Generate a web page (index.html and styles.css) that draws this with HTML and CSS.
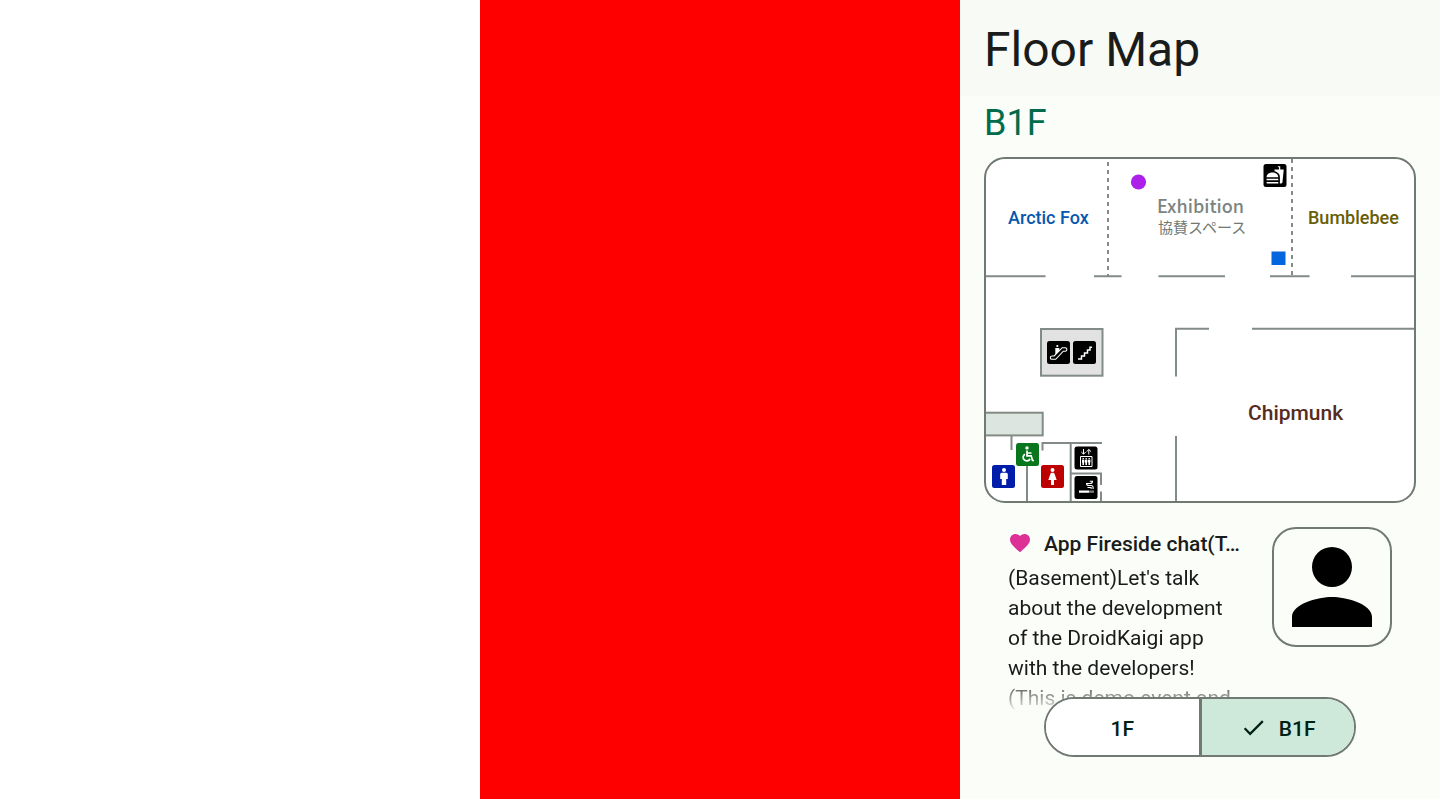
FILE: index.html
```html
<!DOCTYPE html>
<html lang="en">
<head>
<meta charset="utf-8">
<meta name="viewport" content="width=device-width, initial-scale=1">
<title>Floor Map</title>
<link rel="stylesheet" href="styles.css">
</head>
<body>
<div class="panes">
  <div class="pane pane-blank"></div>
  <div class="pane pane-red"></div>
  <main class="pane app">
    <header class="app-bar"><h1 class="app-title">Floor Map</h1></header>
    <section class="content">
      <h2 class="floor-name">B1F</h2>
      <svg class="map" viewBox="984 157 432 346" role="img" aria-label="B1F floor map">
        <defs><clipPath id="outline"><rect x="985" y="158" width="430" height="344" rx="20"/></clipPath></defs>
        <rect x="985" y="158" width="430" height="344" rx="20" fill="#fff"/>
        <g clip-path="url(#outline)">
          <path class="wall" d="M985 276.300H1045.500M1094 276.300H1121.500M1158.500 276.300H1225M1270 276.300H1309.500M1351 276.300H1415M1176 376.500V328.700H1209M1252 328.700H1415M1176 436V502"/>
          <path class="wall dashed" d="M1108 162V276M1292 159V276"/>
          <rect class="wall stairs" x="1041" y="329" width="61.500" height="46.700"/>
          <rect class="wall room" x="980" y="412.700" width="62.700" height="22.700"/>
          <path class="wall" d="M1011.500 436V450M1042.500 450.500V443H1102M1027 465V502M1070.700 443V502M1071 473.500H1101V485M1101 491.500V502"/>
        </g>
        <rect class="frame" x="985" y="158" width="430" height="344" rx="20"/>
        <circle cx="1138.500" cy="182" r="7.600" fill="#ad20ea"/>
        <rect x="1271.500" y="251.500" width="14" height="13.500" fill="#0466df"/>
        <text class="label" x="1008" y="224" fill="#0757ae">Arctic Fox</text>
        <text class="label" x="1308" y="224" fill="#685e08">Bumblebee</text>
        <text class="label label-large" x="1248" y="420" fill="#582b1f">Chipmunk</text>
        <text class="label-hall" x="1157" y="213">Exhibition</text>
        <text class="label-jp" x="1158" y="233">協賛スペース</text>

        <g transform="translate(1263.500 164)">
          <rect width="23" height="23" rx="2.500"/>
          <path transform="translate(2.300 1.500) scale(.78)" fill="#fff" d="M18.060 22.990h1.660c.84 0 1.530-.64 1.630-1.460L23 5.050h-4.500V1h-3v1.300h1.500v2.750h-5.940l.3 2.340c1.710.47 3.310 1.320 4.270 2.260 1.440 1.420 2.430 2.890 2.430 5.290zM1 21.990V21h15.030v1.990H2c-.56 0-1-.45-1-1zm15.030-7c0-8-15.030-8-15.030 0zM1 17h15v2H1z"/>
        </g>
        <g transform="translate(1047 341)">
          <rect width="23" height="23" rx="2.500"/>
          <path d="M5 18.300H8.700L16.300 10.200H18.500A1.800 1.800 0 0 0 18.500 6.700H15.200L7.200 15H5A1.650 1.650 0 0 0 5 18.300Z" fill="none" stroke="#fff" stroke-width="1.100"/>
          <circle cx="10.300" cy="5" r="1.100" fill="#fff"/><path d="M8.300 7H12.300V10L9.300 13H8.300Z" fill="#fff"/>
        </g>
        <g transform="translate(1073 341)">
          <rect width="23" height="23" rx="2.500"/>
          <path d="M5 18H8.500V15H11.500V12H14.500V9H17V6.300H19" fill="none" stroke="#fff" stroke-width="1.500"/>
        </g>
        <g transform="translate(1016 443)">
          <rect width="23" height="23" rx="2.500" fill="#07761d"/>
          <circle cx="11" cy="4.900" r="1.700" fill="#fff"/>
          <path d="M11 7.500V12.800H15.200L16.500 17.500H18M11.500 10H15.500M8.900 11.200A3.600 3.600 0 1 0 14 15.800" fill="none" stroke="#fff" stroke-width="1.700"/>
        </g>
        <g transform="translate(992 465)">
          <rect width="23" height="23" rx="2.500" fill="#001da9"/>
          <circle cx="12" cy="4.900" r="2" fill="#fff"/>
          <path d="M9.700 7.700H14.300Q15.800 7.700 15.800 9.200V14H14.200V20H9.800V14H8.200V9.200Q8.200 7.700 9.700 7.700Z" fill="#fff"/>
        </g>
        <g transform="translate(1041 465)">
          <rect width="23" height="23" rx="2.500" fill="#bd0000"/>
          <circle cx="11.500" cy="4.900" r="2" fill="#fff"/>
          <path d="M10.700 7.700H12.300Q13.200 7.700 13.500 8.700L15.700 15H13V20H10V15H7.300L9.500 8.700Q9.800 7.700 10.700 7.700Z" fill="#fff"/>
        </g>
        <g transform="translate(1074.500 446.500)">
          <rect width="23" height="23" rx="2.500"/>
          <path d="M6 10H17.500V20H6ZM9 2.500V7.500M6.800 5.500L9 7.700L11.200 5.500M14.300 8V3M12 5.200L14.300 3L16.600 5.200" fill="none" stroke="#fff"/>
          <path d="M7.500 13.200H9.900V16H9.500V18.500H7.900V16H7.500ZM10.500 13.200H12.900V16H12.500V18.500H10.900V16H10.500ZM13.500 13.200H15.900V16H15.500V18.500H13.900V16H13.500ZM8 11.500H9.400V12.700H8ZM11 11.500H12.400V12.700H11ZM14 11.500H15.400V12.700H14Z" fill="#fff"/>
        </g>
        <g transform="translate(1074.500 476)">
          <rect width="23" height="23" rx="2.500"/>
          <path d="M4.500 14.500H15V16.800H4.500ZM16 14.500H17V16.800H16ZM18 14.500H19V16.800H18Z" fill="#fff"/>
          <path d="M18.600 13V11.500Q18.600 9.500 16.500 9.500H14.500Q12 9.500 12 7.500H15.500Q18 7.500 18 5.200H15.300M16.600 13V11.500H13" fill="none" stroke="#fff" stroke-width="1.100"/>
        </g>
      </svg>

      <article class="event">
        <div class="event-text">
          <div class="event-head">
            <svg class="heart" viewBox="0 0 24 24" aria-hidden="true"><path d="M12 21.350l-1.450-1.320C5.400 15.360 2 12.280 2 8.500 2 5.420 4.420 3 7.500 3c1.740 0 3.410.81 4.500 2.090C13.090 3.810 14.760 3 16.500 3 19.580 3 22 5.420 22 8.500c0 3.780-3.400 6.860-8.550 11.540z"/></svg>
            <h3 class="event-title">App Fireside chat(T…</h3>
          </div>
          <p class="event-body">(Basement)Let's talk about the development of the DroidKaigi app with the developers!<br>(This is demo event and</p>
        </div>
        <svg class="avatar" viewBox="0 0 120 120" role="img" aria-label="Speaker">
          <rect class="frame" x="1" y="1" width="118" height="118" rx="23"/>
          <path d="M60 60a20 20 0 1 0 0-40 20 20 0 0 0 0 40zM60 70c-13.350 0-40 6.700-40 20v10h80V90c0-13.300-26.650-20-40-20z"/>
        </svg>
      </article>
    </section>
    <div class="switcher" role="group" aria-label="Floor">
      <button class="segment" type="button" aria-pressed="false">1F</button>
      <button class="segment selected" type="button" aria-pressed="true">
        <svg class="check" viewBox="0 0 24 24" aria-hidden="true"><path d="M9 16.170L4.830 12l-1.420 1.410L9 19 21 7l-1.410-1.410z"/></svg>B1F
      </button>
    </div>
  </main>
</div>
</body>
</html>
```
FILE: styles.css
```css
* { box-sizing: border-box; }
body { margin: 0; font-family: Roboto, "Noto Sans CJK JP", sans-serif; color: #191c1b; }
h1, h2, h3, p { margin: 0; font-weight: 400; }
.panes { display: grid; grid-template-columns: repeat(3, minmax(0, 1fr)); min-height: 100vh; }
.pane-blank { background: #fff; }
.pane-red { background: #f00; }
.app { position: relative; background: #fbfdf8; }
.app-bar { padding: 20px 24px 16px; background: #f8faf5; }
.app-title { font-size: 48px; line-height: 60px; }
.content { padding: 0 24px; }
.floor-name { margin-bottom: 7px; font-size: 36px; line-height: 54px; color: #006c4c; }
.map { display: block; width: 100%; }
.frame { fill: none; stroke: #707974; stroke-width: 2px; }
.wall { fill: none; stroke: #828b86; stroke-width: 2px; }
.dashed { stroke-dasharray: 4 4; }
.stairs { fill: #e1e2e1; }
.room { fill: #dce5df; }
.label { font-size: 18px; font-weight: 500; }
.label-large { font-size: 21px; }
.label-hall { font-family: "Noto Sans CJK JP", sans-serif; font-size: 18px; font-weight: 500; fill: #7c8480; }
.label-jp { font-family: "Noto Sans CJK JP", sans-serif; font-size: 15px; fill: #707974; }
.event { display: flex; gap: 24px; align-items: flex-start; margin-top: 24px; padding: 0 24px; }
.event-text { flex: 1; min-width: 0; }
.event-head { display: flex; align-items: center; gap: 12px; margin-bottom: 4px; }
.heart { flex: none; width: 24px; height: 24px; fill: #dd3198; }
.event-title { overflow: hidden; padding-top: 2px; font-size: 21px; line-height: 30px; font-weight: 500; white-space: nowrap; }
.event-body { padding-right: 8px; font-size: 21px; line-height: 30px; -webkit-mask-image: linear-gradient(#000 75%, transparent); mask-image: linear-gradient(#000 75%, transparent); }
.avatar { flex: none; width: 120px; height: 120px; }
.switcher { position: absolute; bottom: 42px; left: 50%; display: flex; width: 312px; height: 60px; overflow: hidden; border: 2px solid #707974; border-radius: 30px; background: #fff; transform: translateX(-50%); }
.segment { display: flex; flex: 1; align-items: center; justify-content: center; gap: 12px; padding: 4px 0 0; border: 0; background: #fff; color: #002116; font: 500 21px/30px Roboto, sans-serif; }
.segment.selected { border-left: 3px solid #707974; background: #cee9da; }
.check { width: 27px; height: 27px; margin-bottom: 4px; fill: currentColor; }
```
